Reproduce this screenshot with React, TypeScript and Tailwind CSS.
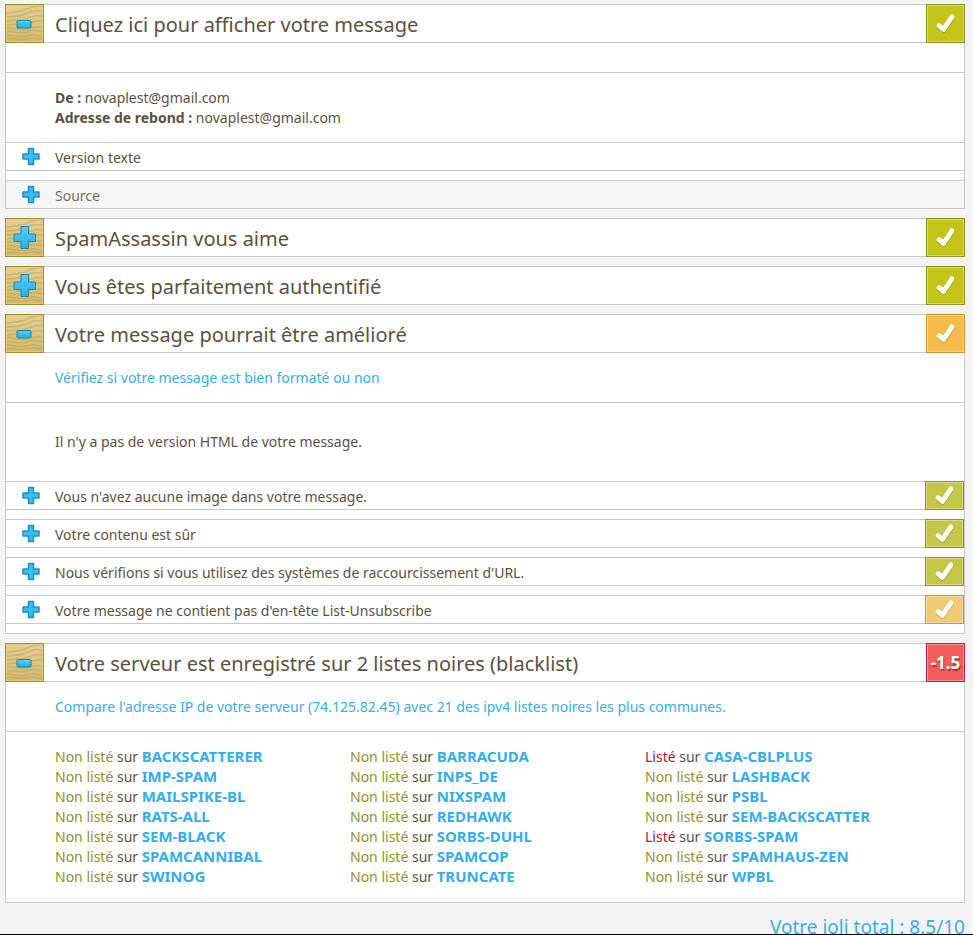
import React, { useState } from 'react';

type Status = 'good' | 'warn' | 'bad';

interface BlacklistEntry {
  name: string;
  listed?: boolean;
}

const BLACKLISTS: BlacklistEntry[] = [
  { name: 'BACKSCATTERER' },
  { name: 'BARRACUDA' },
  { name: 'CASA-CBLPLUS', listed: true },
  { name: 'IMP-SPAM' },
  { name: 'INPS_DE' },
  { name: 'LASHBACK' },
  { name: 'MAILSPIKE-BL' },
  { name: 'NIXSPAM' },
  { name: 'PSBL' },
  { name: 'RATS-ALL' },
  { name: 'REDHAWK' },
  { name: 'SEM-BACKSCATTER' },
  { name: 'SEM-BLACK' },
  { name: 'SORBS-DUHL' },
  { name: 'SORBS-SPAM', listed: true },
  { name: 'SPAMCANNIBAL' },
  { name: 'SPAMCOP' },
  { name: 'SPAMHAUS-ZEN' },
  { name: 'SWINOG' },
  { name: 'TRUNCATE' },
  { name: 'WPBL' },
];

const FORMAT_CHECKS: { label: string; status: Status }[] = [
  { label: "Vous n'avez aucune image dans votre message.", status: 'good' },
  { label: 'Votre contenu est sûr', status: 'good' },
  { label: "Nous vérifions si vous utilisez des systèmes de raccourcissement d'URL.", status: 'good' },
  { label: "Votre message ne contient pas d'en-tête List-Unsubscribe", status: 'warn' },
];

function WoodIcon({ open }: { open: boolean }) {
  return (
    <svg width="39" height="39" viewBox="0 0 39 39" className="block shrink-0" aria-hidden="true">
      <defs>
        <linearGradient id="wood" x1="0" y1="0" x2="0" y2="1">
          <stop offset="0" stopColor="#e2d196" />
          <stop offset="1" stopColor="#d2ba6c" />
        </linearGradient>
        <linearGradient id="blue" x1="0" y1="0" x2="0" y2="1">
          <stop offset="0" stopColor="#5fcbff" />
          <stop offset="1" stopColor="#1fb2f8" />
        </linearGradient>
      </defs>
      <rect x="0.5" y="0.5" width="38" height="38" fill="url(#wood)" stroke="#a98e2c" />
      <g fill="none" stroke="#b99f5c" strokeOpacity="0.5" strokeWidth="1.5">
        <path d="M2 9c9-1 14-1 20-4s9-3 15-3" />
        <path d="M2 13c8-1 14 0 21-4s9-2 14-2" />
        <path d="M2 17c7-2 12 1 19-2s10-4 16-3" />
        <path d="M2 21c8-2 12 1 19-1s10-4 16-3" />
        <path d="M2 24c6-1 12 3 19 1s11-3 16-2" />
        <path d="M2 28c6-2 13 3 20 0s10-1 15 0" />
        <path d="M2 31c7 0 11 3 19 1s10-2 16 1" />
        <path d="M2 35c8-2 12 2 19 0s11-1 16 1" />
      </g>
      <rect x="1.5" y="1.5" width="36" height="36" fill="none" stroke="#e5cd66" strokeOpacity="0.8" />
      {open ? (
        <rect x="12" y="16.5" width="14" height="7.5" rx="1" fill="url(#blue)" stroke="#2284a6" />
      ) : (
        <path
          d="M16 8.5h7.500v7.500h7v7.500h-7v7h-7.500v-7h-7v-7.500h7z"
          fill="url(#blue)"
          stroke="#2284a6"
          strokeLinejoin="round"
        />
      )}
    </svg>
  );
}

function SmallToggleIcon({ open }: { open: boolean }) {
  return (
    <svg width="20" height="20" viewBox="0 0 20 20" className="block shrink-0" aria-hidden="true">
      <path
        d={open ? 'M2.500 7h15v6h-15z' : 'M7.500 1.500h5v5.500h5.500v5h-5.500v5.500h-5v-5.500h-5.500v-5h5.500z'}
        fill="#38bdfb"
        stroke="#2190bd"
        strokeWidth="1.500"
        strokeLinejoin="round"
      />
    </svg>
  );
}

function CheckIcon() {
  return (
    <svg width="20" height="20" viewBox="0 0 20 20" className="block overflow-visible" aria-hidden="true">
      <g fill="none" strokeWidth="4.8" strokeLinejoin="round" strokeLinecap="round">
        <path d="M3.200 12.800l4.500 3.700 8.500-12.500" stroke="#000" strokeOpacity="0.2" />
        <path d="M3 11.700l4.500 3.700 8.500-12.500" stroke="#fff" />
      </g>
    </svg>
  );
}

const BADGE_COLORS: Record<Status, string> = {
  good: 'bg-[#c3c51b] border-[#8f9127]',
  warn: 'bg-[#f4bc4a] border-[#cb9430]',
  bad: 'bg-[#f45b5b] border-[#b72745]',
};

function Badge({ status, score, faded }: { status: Status; score?: string; faded?: boolean }) {
  let colors = BADGE_COLORS[status];
  if (faded) {
    colors = status === 'good' ? 'bg-[#c4c645] border-[#8f9127]' : 'bg-[#f1cb74] border-[#c6972f]';
  }
  return (
    <span
      className={`flex w-[39px] shrink-0 items-center justify-center border shadow-[inset_0_0_0_1px_rgba(255,255,255,0.35)] ${colors}`}
    >
      {score ? (
        <span className="text-[17px] font-bold text-white [text-shadow:1px_2px_1px_rgba(0,0,0,0.35)]">{score}</span>
      ) : (
        <CheckIcon />
      )}
    </span>
  );
}

interface SectionProps {
  title: string;
  status: Status;
  score?: string;
  defaultOpen?: boolean;
  children?: React.ReactNode;
}

function Section({ title, status, score, defaultOpen = false, children }: SectionProps) {
  const [open, setOpen] = useState(defaultOpen);

  return (
    <section>
      <h2>
        <button
          type="button"
          aria-expanded={open}
          onClick={() => setOpen(!open)}
          className="flex h-[39px] w-full cursor-pointer bg-white text-left"
        >
          <WoodIcon open={open} />
          <span className="flex min-w-0 flex-1 items-center self-stretch border-y border-[#c8c8c8] pt-0.5 pl-[11px] text-[20px] leading-7">
            {title}
          </span>
          <Badge status={status} score={score} />
        </button>
      </h2>
      {open && children && <div className="border-x border-b border-[#c8c8c8] bg-white">{children}</div>}
    </section>
  );
}

interface RowProps {
  label: string;
  status?: Status;
  last?: boolean;
  muted?: boolean;
}

function Row({ label, status, last, muted }: RowProps) {
  const [open, setOpen] = useState(false);

  return (
    <button
      type="button"
      aria-expanded={open}
      onClick={() => setOpen(!open)}
      className={`flex w-full cursor-pointer text-left ${last ? 'h-7' : 'h-[29px]'} ${muted ? 'bg-[#f6f6f6] text-[#766d60]' : ''}`}
    >
      <span
        className={`flex h-full min-w-0 flex-1 items-center border-t border-[#c8c8c8] pl-[15px] ${last ? '' : 'border-b'}`}
      >
        <SmallToggleIcon open={open} />
        <span className="pt-0.5 pl-[14px]">{label}</span>
      </span>
      {status && <Badge status={status} faded />}
    </button>
  );
}

export default function App() {
  return (
    <div className="min-h-screen border-b border-black bg-[#f4f4f4] pt-1 pr-2 pl-[5px] font-['Noto_Sans',sans-serif] text-sm leading-5 text-[#5c5140]">
      <main className="flex flex-col gap-[9px]">
        <Section title="Cliquez ici pour afficher votre message" status="good" defaultOpen>
          <div className="h-[30px] border-b border-[#c8c8c8]" />
          <div className="pt-[15px] pb-[14px] pl-[49px]">
            <p>
              <strong>De :</strong> novaplest@gmail.com
            </p>
            <p>
              <strong>Adresse de rebond :</strong> novaplest@gmail.com
            </p>
          </div>
          <div className="flex flex-col gap-[9px]">
            <Row label="Version texte" />
            <Row label="Source" muted last />
          </div>
        </Section>

        <Section title="SpamAssassin vous aime" status="good" />
        <Section title="Vous êtes parfaitement authentifié" status="good" />

        <Section title="Votre message pourrait être amélioré" status="warn" defaultOpen>
          <p className="border-b border-[#c8c8c8] pt-[15px] pb-[14px] pl-[49px] text-[#35aeea]">
            Vérifiez si votre message est bien formaté ou non
          </p>
          <p className="py-[29px] pl-[49px]">Il n'y a pas de version HTML de votre message.</p>
          <div className="flex flex-col gap-[9px] pb-[9px]">
            {FORMAT_CHECKS.map(check => (
              <Row key={check.label} label={check.label} status={check.status} />
            ))}
          </div>
        </Section>

        <Section
          title="Votre serveur est enregistré sur 2 listes noires (blacklist)"
          status="bad"
          score="-1.5"
          defaultOpen
        >
          <p className="border-b border-[#c8c8c8] pt-[15px] pb-[14px] pl-[49px] text-[#35aeea]">
            Compare l'adresse IP de votre serveur (74.125.82.45) avec 21 des ipv4 listes noires les plus communes.
          </p>
          <ul className="grid grid-cols-3 py-[15px] pr-6 pl-[49px]">
            {BLACKLISTS.map(entry => (
              <li key={entry.name}>
                {entry.listed ? (
                  <span className="text-[#b8123c]">Listé</span>
                ) : (
                  <span className="text-[#8f9127]">Non listé</span>
                )}{' '}
                sur{' '}
                <a href="#" className="text-[15px] leading-4 font-bold text-[#33adef]">
                  {entry.name}
                </a>
              </li>
            ))}
          </ul>
        </Section>
      </main>

      {/* Final score */}
      <footer className="h-[31px] overflow-hidden pt-[10px] text-right text-[19px] leading-7 text-[#35aeea]">
        Votre joli total : 8.5/10
      </footer>
    </div>
  );
}
